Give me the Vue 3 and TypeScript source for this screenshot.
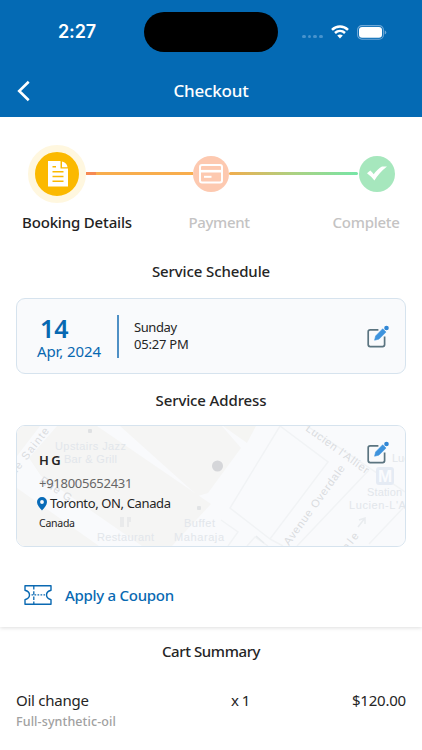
<script setup lang="ts">
interface CartItem {
  name: string
  detail: string
  quantity: number
  price: string
}

const items: CartItem[] = [
  { name: 'Oil change', detail: 'Full-synthetic-oil', quantity: 1, price: '$120.00' },
]
</script>

<template>
  <main class="screen">
    <header class="header">
      <div class="status">
        <span class="clock">2:27</span>
        <span class="island"></span>
        <span class="signal"><i v-for="n in 4" :key="n"></i></span>
        <svg class="wifi" viewBox="0 0 18 14">
          <path d="M1 4.8C5.5.4 12.500.4 17 4.800M4 8C6.900 5.200 11.100 5.200 14 8" fill="none" stroke="#fff" stroke-width="2.5" />
          <path d="M9 13.400 6.200 10.600Q9 8.500 11.800 10.600Z" fill="#fff" />
        </svg>
        <svg class="battery" viewBox="0 0 30 15">
          <rect x=".6" y=".6" width="25.800" height="13.600" rx="4.300" fill="none" stroke="#6ea8d7" stroke-width="1.100" />
          <rect x="2" y="2" width="23" height="10.800" rx="3" fill="#fff" />
          <path d="M27.700 5.200q1.600.7 1.600 2.200t-1.600 2.200z" fill="#6ea8d7" />
        </svg>
      </div>
      <div class="titlebar">
        <svg class="back" viewBox="0 0 14 22"><path d="M11.700 1.700 2.200 11l9.500 9.300" fill="none" stroke="#fff" stroke-width="2.600" /></svg>
        <h1>Checkout</h1>
      </div>
    </header>

    <section class="steps">
      <div class="track">
        <span class="step active">
          <svg viewBox="0 0 20 26">
            <path d="M0 0H12.500V7.500H20V25.500H0Z" fill="#fff" />
            <path d="M14 .5Q18.800 1.500 19.500 6.200H14Z" fill="#fff" />
            <path d="M4.500 5.700H8M4.500 10.700H15.500M4.500 15.500H15.500M4.500 20.200H15.500" stroke="#fbb900" stroke-width="1.500" />
          </svg>
        </span>
        <span class="line first"></span>
        <span class="step payment">
          <svg viewBox="0 0 24 20">
            <rect x="1" y="1" width="22" height="17.500" rx="2" fill="none" stroke="#fff" stroke-width="2" />
            <path d="M1 7.200H23" stroke="#fff" stroke-width="2.600" />
            <path d="M5 12.800H12.500" stroke="#fff" stroke-width="2" />
          </svg>
        </span>
        <span class="line second"></span>
        <span class="step complete">
          <svg viewBox="0 0 20 15"><path d="M0 7.200 3.300 4.500Q5.200 6.200 6.700 8.300Q11 2.400 15 .5H20Q12.300 6.500 7.400 14.500Q4.200 10.300 0 7.200Z" fill="#fff" /></svg>
        </span>
      </div>
      <div class="labels">
        <span class="current">Booking Details</span>
        <span class="pay">Payment</span>
        <span class="done">Complete</span>
      </div>
    </section>

    <h2 class="schedule-title">Service Schedule</h2>
    <section class="card schedule">
      <div class="date">
        <strong>14</strong>
        <span>Apr, 2024</span>
      </div>
      <div class="time">
        <span class="day">Sunday</span>
        <span class="hour">05:27 PM</span>
      </div>
      <svg class="edit" viewBox="0 0 22 24">
        <path d="M11.400 4.800H3.200Q1.200 4.800 1.200 6.800V19.600Q1.200 21.600 3.200 21.600H15.600Q17.600 21.600 17.600 19.600V11.500" fill="none" stroke="#5b7480" stroke-width="1.700" />
        <path d="M8.600 11 15.700 3.800 19 7.100 12 14.100 7.600 15.200Z" fill="#3e93dd" stroke="#3e93dd" stroke-width=".6" stroke-linejoin="round" />
        <circle cx="19.500" cy="3" r="2.300" fill="#3187d5" />
      </svg>
    </section>

    <h2 class="address-title">Service Address</h2>
    <section class="card address">
      <svg class="map" viewBox="0 0 388 120">
        <rect width="388" height="120" fill="#f9fafc" />
        <path d="M40 0H80L194 78 155 120H125L24 50 12 32Z" fill="#f5f5f4" />
        <path d="M0 0H23L0 30ZM0 62 82 120H0Z" fill="#f5f5f4" />
        <path d="M103 0H205L224 22 191 67 181 70Z" fill="#f5f5f4" />
        <path d="M206 0 230 17 239 0Z" fill="#f5f5f3" />
        <g fill="none" stroke="#f1f3f5" stroke-width="1.500">
          <path d="M263 0 213 82 253 113 311 36 263 0M204 94l17 12-10 14M290 0 388 66M253 113l13 7M280 120 352 44M352 118 388 80M230 120l8-9 13 9" />
        </g>
        <g class="place">
          <text x="38" y="24" textLength="71">Upstairs Jazz</text>
          <text x="47" y="37" textLength="53">Bar &amp; Grill</text>
          <text x="80" y="115" textLength="57">Restaurant</text>
          <text x="167" y="101" textLength="31">Buffet</text>
          <text x="157" y="115" textLength="50">Maharaja</text>
          <text x="350" y="70" textLength="35">Station</text>
          <text x="332" y="83" textLength="77">Lucien-L'Allier</text>
          <text x="375" y="36">Lucien</text>
        </g>
        <g class="road">
          <text transform="translate(-8 57) rotate(-52)" textLength="66">Rue Sainte</text>
          <text transform="translate(22 56) rotate(34)" textLength="36">Rue G</text>
          <text transform="translate(288 4) rotate(36)" textLength="75">Lucien l'Allier</text>
          <text transform="translate(272 120) rotate(-54)" textLength="96">Avenue Overdale</text>
          <text transform="translate(325 132) rotate(-52)" textLength="28">dale</text>
        </g>
        <circle cx="200.500" cy="40" r="5.500" fill="#d5d6d9" />
        <rect x="71" y="3" width="4" height="4" rx="1" fill="#dfe1e3" />
        <rect x="180" y="80" width="4" height="4" rx="1" fill="#e1e3e5" />
        <path d="M104 91v10M106 91v10M111 91v10M113 91v5" stroke="#e4e6e9" stroke-width="1.500" />
        <rect x="359" y="41" width="18" height="18" rx="3" fill="#e5ebf4" />
        <text class="metro" x="361" y="56">M</text>
        <path d="m341 101 7-9m-6 2 6-2v6M239 110l8 7" fill="none" stroke="#e9ecef" stroke-width="1.500" />
      </svg>
      <div class="contact">
        <strong>H G</strong>
        <span class="phone">+918005652431</span>
        <span class="city">
          <svg viewBox="0 0 10 14"><path fill-rule="evenodd" d="M5 0a5 4.900 0 0 1 5 4.900C10 8 7 11 5 13.600 3 11 0 8 0 4.900A5 4.900 0 0 1 5 0Zm0 3.100a1.900 1.900 0 1 0 0 3.800 1.900 1.900 0 0 0 0-3.800Z" fill="#086bb8" /></svg>
          <span>Toronto, ON, Canada</span>
        </span>
        <span class="country">Canada</span>
      </div>
      <svg class="edit" viewBox="0 0 22 24">
        <path d="M11.400 4.800H3.200Q1.200 4.800 1.200 6.800V19.600Q1.200 21.600 3.200 21.600H15.600Q17.600 21.600 17.600 19.600V11.500" fill="none" stroke="#5b7480" stroke-width="1.700" />
        <path d="M8.600 11 15.700 3.800 19 7.100 12 14.100 7.600 15.200Z" fill="#3e93dd" stroke="#3e93dd" stroke-width=".6" stroke-linejoin="round" />
        <circle cx="19.500" cy="3" r="2.300" fill="#3187d5" />
      </svg>
    </section>

    <section class="coupon">
      <svg viewBox="0 0 28 20">
        <path d="M1 .8H27V5.300Q22.500 6.500 22.500 10T27 14.700V19.200H1V14.700Q5.500 13.500 5.500 10T1 5.300Z" fill="none" stroke="#0a69b2" stroke-width="1.400" stroke-linejoin="round" />
        <path d="M9.800 1V19" stroke="#0a69b2" stroke-width="1.300" stroke-dasharray="3.500 1.700" />
        <path d="M7.500 9.800H21" stroke="#0a69b2" stroke-width="1.200" stroke-dasharray="1.700 1.300" />
      </svg>
      <span>Apply a Coupon</span>
    </section>

    <section class="cart">
      <h2 class="cart-title">Cart Summary</h2>
      <div v-for="item in items" :key="item.name" class="item">
        <div class="product">
          <span class="name">{{ item.name }}</span>
          <small>{{ item.detail }}</small>
        </div>
        <span class="quantity">x {{ item.quantity }}</span>
        <span class="price">{{ item.price }}</span>
      </div>
    </section>
  </main>
</template>

<style>
body { background: #fff; overflow: hidden; }
</style>

<style scoped>
* { box-sizing: border-box; }
.screen { width: 422px; height: 750px; overflow: hidden; background: #fff; color: #252525; font-family: "Noto Sans", "Open Sans", sans-serif; font-size: 15px; white-space: nowrap; }
.screen svg { display: block; flex: none; }
h1, h2 { margin: 0; font-weight: 500; }
.header { height: 117px; background: #046ab4; color: #fff; }
.status { display: flex; align-items: center; height: 64px; padding-left: 58px; }
.clock { width: 86px; font: 600 18px/22px Inter, sans-serif; letter-spacing: -.1px; }
.island { width: 134px; height: 40px; border-radius: 20px; background: #000; }
.signal { display: flex; gap: 2px; margin: 9px 8px 0 24px; }
.signal i { width: 3.700px; height: 3.700px; border-radius: 50%; background: #4793cd; }
.wifi { width: 18px; height: 14px; }
.battery { width: 30px; height: 15px; margin-left: 8px; }
.titlebar { display: flex; align-items: center; height: 53px; padding-left: 17px; }
.back { width: 14px; height: 22px; }
.titlebar h1 { width: 360px; font-size: 17px; line-height: 24px; letter-spacing: -.2px; text-align: center; }
.steps { height: 120px; padding-top: 27.500px; }
.track { display: flex; align-items: center; height: 58px; padding-left: 28px; }
.step { display: flex; flex: none; align-items: center; justify-content: center; border-radius: 50%; }
.active { width: 58px; height: 58px; border: 7px solid #fff7df; background: #fbb900; }
.active svg { width: 20px; height: 26px; margin-left: 2px; }
.payment { width: 36px; height: 36px; background: #fdc9b0; }
.payment svg { width: 24px; height: 20px; }
.complete { width: 36px; height: 36px; background: #a6e7bd; }
.complete svg { width: 20px; height: 15px; }
.line { height: 3px; }
.first { width: 107px; background: linear-gradient(90deg, #f68a52 0 10px, #f8ad4d 10px); }
.second { width: 129px; margin-right: 1px; background: linear-gradient(90deg, #f1ad4d, #acd182 50%, #76e5a7); border-radius: 2px; }
.labels { display: flex; height: 20px; margin-top: 9.500px; padding-left: 22px; font-weight: 500; line-height: 20px; color: #c4c3c3; }
.labels .current { width: 166.500px; color: #222; letter-spacing: -.17px; }
.labels .pay { width: 144px; letter-spacing: -.35px; }
.done { letter-spacing: -.25px; }
h2 { font-size: 15px; line-height: 22px; text-align: center; letter-spacing: -.12px; }
.schedule-title { padding-top: 23px; }
.card { position: relative; display: flex; margin: 0 16px; border: 1px solid #d6e3ee; border-radius: 9px; background: #f9fafc; overflow: hidden; }
.schedule { height: 76px; margin-top: 16px; }
.date { display: flex; flex-direction: column; width: 102px; height: 43px; margin-top: 16px; padding-left: 20px; border-right: 2px solid #4f90c5; color: #0868b1; }
.date strong { margin-top: -1px; padding-left: 3px; font-size: 25px; font-weight: 600; line-height: 28px; }
.date span { line-height: 18px; letter-spacing: -.1px; }
.time { display: flex; flex: 1; flex-direction: column; padding: 20px 0 0 15px; font-size: 13px; line-height: 17px; }
.day { letter-spacing: -.4px; }
.hour { letter-spacing: -.22px; }
.edit { position: relative; width: 22px; height: 24px; margin: 25.500px 16px 0 0; }
.address-title { padding-top: 15px; }
.address { height: 122px; margin-top: 14px; justify-content: space-between; }
.address .edit { margin-top: 15px; }
.map { position: absolute; inset: 0; width: 388px; height: 120px; }
.map text { font-family: "Liberation Sans", sans-serif; }
.place { font-size: 11px; fill: #e2e6eb; }
.road { font-size: 11px; fill: #dadcdf; }
.map .metro { font-size: 17px; font-weight: 700; fill: #fafbfe; }
.contact { position: relative; display: flex; flex-direction: column; padding: 24px 0 0 22px; }
.contact strong { font-size: 13px; font-weight: 600; line-height: 20px; letter-spacing: -.5px; }
.phone { margin-top: 3px; font-size: 13px; line-height: 20px; letter-spacing: -.27px; color: #666; }
.city { display: flex; align-items: center; gap: 3px; margin-left: -2px; font-size: 13px; line-height: 21px; letter-spacing: -.37px; }
.city svg { width: 10px; height: 14px; }
.country { font-size: 10.500px; line-height: 19px; letter-spacing: -.25px; }
.coupon { display: flex; align-items: center; height: 80px; padding: 15px 0 0 24px; gap: 13px; color: #0869b2; font-weight: 500; letter-spacing: -.28px; box-shadow: 0 1px 4px #0002; clip-path: inset(0 0 -8px 0); }
.coupon svg { width: 28px; height: 20px; }
.cart-title { padding-top: 12.500px; letter-spacing: -.4px; }
.item { display: flex; margin-top: 27.500px; padding: 0 16px; line-height: 22px; }
.product { display: flex; flex-direction: column; width: 215px; }
.name { letter-spacing: -.25px; }
.product small { margin-top: 1px; font-size: 12.500px; font-weight: 500; line-height: 20px; letter-spacing: .1px; color: #a1a1a1; }
.quantity { letter-spacing: -.5px; }
.price { margin-left: auto; letter-spacing: -.2px; }
</style>
